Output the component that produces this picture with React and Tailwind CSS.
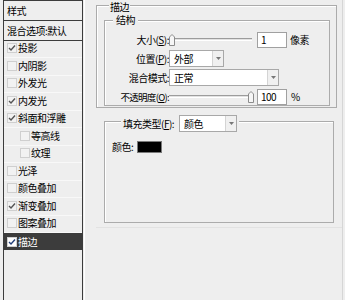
import React from "react";

const items = [
  { label: "投影", checked: true },
  { label: "内阴影" },
  { label: "外发光" },
  { label: "内发光", checked: true },
  { label: "斜面和浮雕", checked: true },
  { label: "等高线", sub: true },
  { label: "纹理", sub: true },
  { label: "光泽" },
  { label: "颜色叠加" },
  { label: "渐变叠加", checked: true },
  { label: "图案叠加" },
];

function Check({ checked, active }) {
  return (
    <div
      className={
        "w-[10px] h-[10px] border flex items-center justify-center " +
        (active ? "bg-white border-[#d0d0d0]" : "bg-[#f2f2f2] border-[#cfcfcf]")
      }
    >
      {checked && (
        <svg width="8" height="8" viewBox="0 0 8 8">
          <path
            d="M1 4 L3 6 L7 1.5"
            fill="none"
            stroke={active ? "#24407a" : "#555"}
            strokeWidth="1.4"
          />
        </svg>
      )}
    </div>
  );
}

function Thumb() {
  return (
    <svg width="6" height="12" viewBox="0 0 6 12" className="shrink-0">
      <path d="M0.5 3 L3 0.5 L5.5 3 L5.5 11.5 L0.5 11.5 Z" fill="#f6f6f6" stroke="#8c8c8c" />
    </svg>
  );
}

function Track() {
  return <div className="flex-1 h-[3px] border-t border-[#9c9c9c] border-b border-b-white bg-[#e2e2e2]" />;
}

function Select({ value, className }) {
  return (
    <div className={"h-[17px] border border-[#a8a8a8] bg-white flex items-stretch " + className}>
      <div className="flex-1 pl-[4px] flex items-center">{value}</div>
      <div className="w-[11px] border-l border-[#d4d4d4] bg-[#f0f0f0] flex items-center justify-center">
        <svg width="5" height="3" viewBox="0 0 5 3">
          <path d="M0 0 L5 0 L2.5 3 Z" fill="#777" />
        </svg>
      </div>
    </div>
  );
}

function Field({ value }) {
  return (
    <div className="w-[30px] h-[16px] border border-[#a0a0a0] bg-white pl-[3px] flex items-center">
      {value}
    </div>
  );
}

function Sidebar() {
  return (
    <div className="ml-[3px] w-[80px] h-full border-x border-t border-[#3c3c3c] flex flex-col">
      <div className="h-[20px] border-b border-[#3c3c3c] pl-[3px] flex items-center">样式</div>
      <div className="h-[20px] border-b border-[#3c3c3c] pl-[3px] flex items-center">混合选项:默认</div>
      {items.map((it, i) => (
        <div
          key={it.label}
          className={
            (i % 2 === 0 ? "h-[17px]" : "h-[18px]") +
            " border-b border-[#f8f8f8] flex items-center gap-[1px] pb-[2px] " +
            (it.sub ? "pl-[16px]" : "pl-[3px]")
          }
        >
          <Check checked={it.checked} />
          <span>{it.label}</span>
        </div>
      ))}
      <div className="h-[17px] bg-[#3c3c3c] text-white flex items-center gap-[1px] pl-[3px]">
        <Check checked active />
        <span>描边</span>
      </div>
    </div>
  );
}

export default function App() {
  return (
    <div className="w-[345px] h-[300px] bg-[#eeeeee] flex overflow-hidden text-black text-[10px] leading-[12px] tracking-[-0.5px] font-['Noto_Sans_CJK_SC','Noto_Sans',sans-serif]">
      <Sidebar />
      <div className="w-[12px] ml-[1px] border-l border-white" />

      <div className="w-[247px] h-full border-r border-[#d6d6d6] flex flex-col">
        {/* 描边 / 结构 */}
        <div className="w-[241px] h-[103px] mt-[5px] border border-[#ababab] shadow-[inset_1px_1px_0_#fff] flex flex-col">
          <span className="-mt-[5px] ml-[12px] px-[1px] bg-[#eeeeee] self-start">描边</span>
          <div className="ml-[7px] mt-[7px] w-[226px] h-[86px] border border-[#ababab] shadow-[inset_1px_1px_0_#fff] flex flex-col">
            <span className="-mt-[7px] ml-[8px] px-[3px] bg-[#eeeeee] self-start">结构</span>
            <div className="mt-[4px] flex flex-col">
              <div className="h-[19px] flex items-center">
                <span className="w-[64px] flex justify-end whitespace-nowrap">大小(<u>S</u>):</span>
                <div className="w-[83px] flex items-center">
                  <Thumb />
                  <Track />
                </div>
                <div className="ml-[5px]"><Field value="1" /></div>
                <span className="ml-[3px]">像素</span>
              </div>
              <div className="h-[19px] flex items-center">
                <span className="w-[64px] flex justify-end whitespace-nowrap">位置(<u>P</u>):</span>
                <Select value="外部" className="w-[55px]" />
              </div>
              <div className="h-[19px] flex items-center">
                <span className="w-[64px] flex justify-end whitespace-nowrap">混合模式:</span>
                <Select value="正常" className="w-[110px]" />
              </div>
              <div className="h-[19px] flex items-center">
                <span className="w-[64px] flex justify-end whitespace-nowrap text-[9.5px] tracking-[-0.7px]">不透明度(<u>O</u>):</span>
                <div className="w-[85px] flex items-center">
                  <Track />
                  <Thumb />
                </div>
                <div className="ml-[3px]"><Field value="100" /></div>
                <span className="ml-[4px]">%</span>
              </div>
            </div>
          </div>
        </div>

        {/* 填充类型 */}
        <div className="ml-[8px] mt-[13px] w-[230px] h-[102px] border border-[#ababab] shadow-[inset_1px_1px_0_#fff] flex flex-col">
          <div className="-mt-[7px] ml-[16px] px-[2px] bg-[#eeeeee] self-start flex items-center">
            <span className="w-[56px]">填充类型(<u>F</u>):</span>
            <Select value="颜色" className="w-[58px]" />
          </div>
          <div className="mt-[8px] pl-[7px] h-[14px] flex items-center">
            <span className="w-[25px]">颜色:</span>
            <div className="w-[25px] h-[12px] bg-black border border-[#7a7a7a]" />
          </div>
        </div>
        <div className="mt-[4px] border-t border-[#e2e2e2]" />
      </div>
    </div>
  );
}
